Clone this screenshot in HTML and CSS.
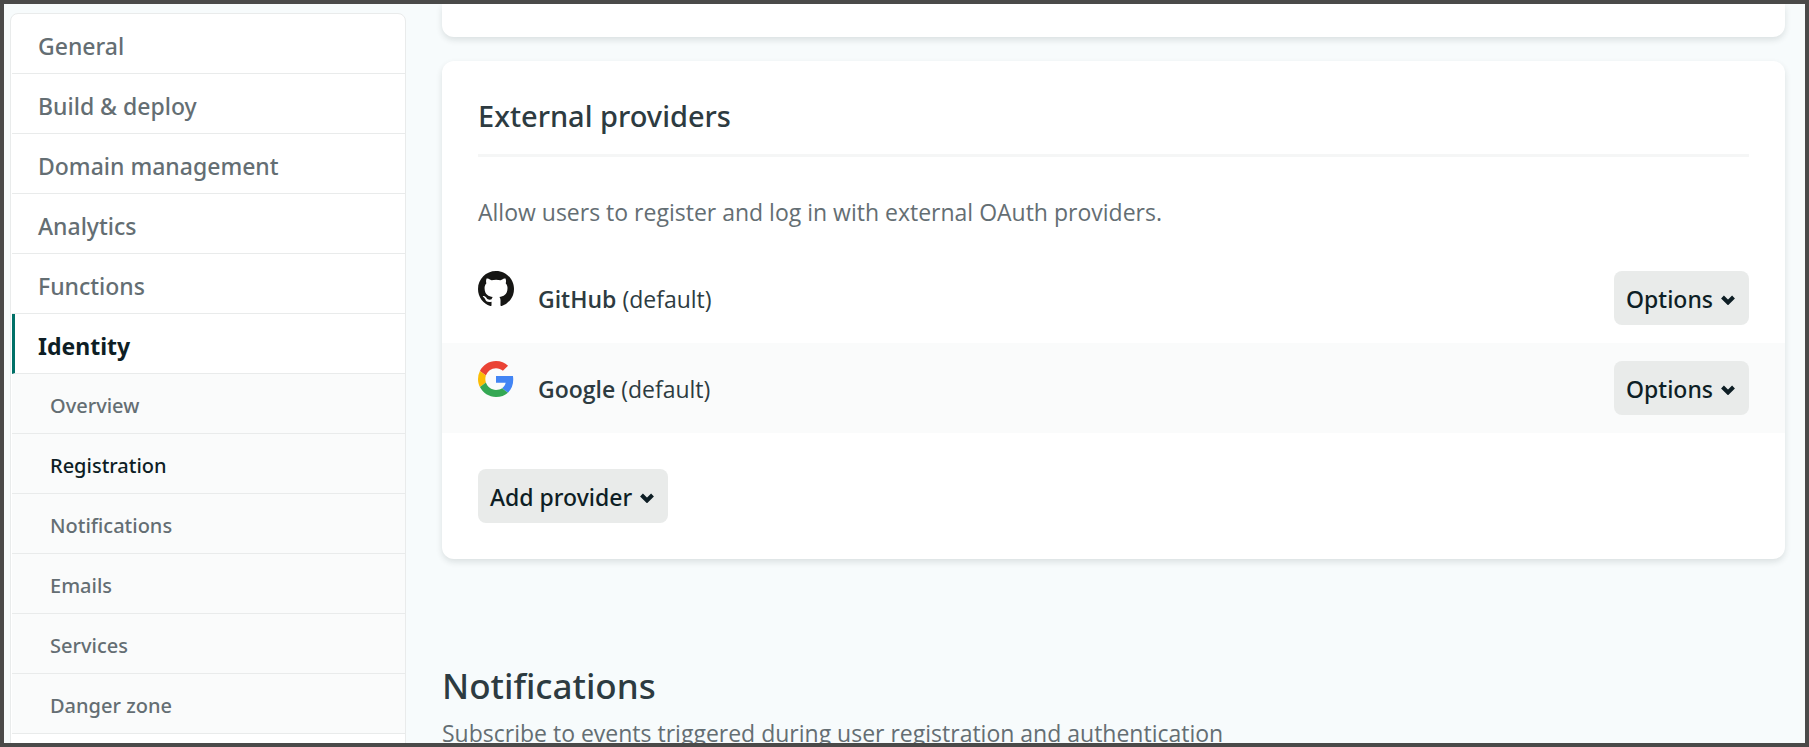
FILE: index.html
```html
<!DOCTYPE html>
<html lang="en">
<head>
<meta charset="utf-8">
<title>Identity settings</title>
<link rel="stylesheet" href="styles.css">
</head>
<body>
<div class="app">
  <nav class="sidebar" aria-label="Site settings">
    <ul class="menu">
      <li><a class="item" href="#general">General</a></li>
      <li><a class="item" href="#build">Build &amp; deploy</a></li>
      <li><a class="item" href="#domain">Domain management</a></li>
      <li><a class="item" href="#analytics">Analytics</a></li>
      <li><a class="item" href="#functions">Functions</a></li>
      <li><a class="item item-active" href="#identity">Identity</a>
        <ul class="submenu">
          <li><a class="item subitem" href="#overview">Overview</a></li>
          <li><a class="item subitem subitem-active" href="#registration">Registration</a></li>
          <li><a class="item subitem" href="#notifications">Notifications</a></li>
          <li><a class="item subitem" href="#emails">Emails</a></li>
          <li><a class="item subitem" href="#services">Services</a></li>
          <li><a class="item subitem" href="#danger">Danger zone</a></li>
        </ul>
      </li>
    </ul>
  </nav>
  <main class="content">
    <section class="card card-previous"></section>
    <section class="card card-providers">
      <h3 class="card-title">External providers</h3>
      <p class="card-text">Allow users to register and log in with external OAuth providers.</p>
      <ul class="providers">
        <li class="provider">
          <svg class="logo" viewBox="0 0 16 16" aria-hidden="true"><path fill="#161614" d="M8 0C3.58 0 0 3.58 0 8c0 3.54 2.29 6.53 5.47 7.59.4.07.55-.17.55-.38 0-.19-.01-.82-.01-1.49-2.01.37-2.53-.49-2.69-.94-.09-.23-.48-.94-.82-1.13-.28-.15-.68-.52-.01-.53.63-.01 1.08.58 1.23.82.72 1.21 1.87.87 2.33.66.07-.52.28-.87.51-1.07-1.78-.2-3.64-.89-3.64-3.95 0-.87.31-1.59.82-2.15-.08-.2-.36-1.02.08-2.12 0 0 .67-.21 2.2.82.64-.18 1.32-.27 2-.27s1.36.09 2 .27c1.53-1.04 2.2-.82 2.2-.82.44 1.1.16 1.92.08 2.12.51.56.82 1.27.82 2.15 0 3.07-1.87 3.75-3.65 3.95.29.25.54.73.54 1.48 0 1.07-.01 1.93-.01 2.2 0 .21.15.46.55.38A8.01 8.01 0 0 0 16 8c0-4.42-3.58-8-8-8z"/></svg>
          <span class="provider-name"><strong>GitHub</strong> (default)</span>
          <button class="button" type="button">Options <svg class="chevron" viewBox="0 0 14 10" aria-hidden="true"><path d="M1.500 2l5.500 5.500 5.500-5.500"/></svg></button>
        </li>
        <li class="provider">
          <svg class="logo" viewBox="0 0 48 48" aria-hidden="true"><path fill="#ea4335" d="M24 9.5c3.54 0 6.71 1.22 9.21 3.6l6.85-6.85C35.9 2.38 30.47 0 24 0 14.62 0 6.51 5.38 2.56 13.22l7.98 6.19C12.43 13.72 17.74 9.5 24 9.5z"/><path fill="#4285f4" d="M46.98 24.55c0-1.57-.15-3.09-.38-4.55H24v9.02h12.94c-.58 2.96-2.26 5.48-4.78 7.18l7.73 6c4.51-4.18 7.09-10.36 7.09-17.65z"/><path fill="#fbbc05" d="M10.53 28.59A14.5 14.5 0 0 1 9.77 24c0-1.6.27-3.14.76-4.59l-7.98-6.19A23.9 23.9 0 0 0 0 24c0 3.88.92 7.54 2.56 10.78l7.97-6.19z"/><path fill="#34a853" d="M24 48c6.48 0 11.93-2.13 15.89-5.81l-7.73-6C30.01 37.64 27.24 38.5 24 38.5c-6.26 0-11.57-4.22-13.47-9.91l-7.98 6.19C6.51 42.62 14.62 48 24 48z"/></svg>
          <span class="provider-name"><strong>Google</strong> (default)</span>
          <button class="button" type="button">Options <svg class="chevron" viewBox="0 0 14 10" aria-hidden="true"><path d="M1.500 2l5.500 5.500 5.500-5.500"/></svg></button>
        </li>
      </ul>
      <div class="actions">
        <button class="button" type="button">Add provider <svg class="chevron" viewBox="0 0 14 10" aria-hidden="true"><path d="M1.500 2l5.500 5.500 5.500-5.500"/></svg></button>
      </div>
    </section>
    <header class="section-header">
      <h2 class="section-title">Notifications</h2>
      <p class="section-text">Subscribe to events triggered during user registration and authentication</p>
    </header>
  </main>
</div>
</body>
</html>
```
FILE: styles.css
```css
* { box-sizing: border-box; }

body {
  margin: 0;
  font-family: "Noto Sans", "Open Sans", sans-serif;
  font-size: 23px;
  line-height: 36px;
  color: #2d3b41;
}

ul { margin: 0; padding: 0; list-style: none; }
h2, h3, p { margin: 0; }

.app {
  display: grid;
  grid-template-columns: 396px minmax(0, 1fr);
  gap: 36px;
  height: 100vh;
  padding: 0 20px 0 6px;
  border: 4px solid #4a4a49;
  overflow: hidden;
  background: #f7fbfc;
}

.sidebar { padding-top: 9px; }

.menu {
  min-height: 100vh;
  padding-left: 1px;
  border: 1px solid #e9ebeb;
  border-radius: 8px 8px 0 0;
  background: #fff;
}

.item {
  display: block;
  height: 60px;
  padding: 14px 24px 8px 26px;
  border-bottom: 1px solid #e9ebeb;
  color: #646e73;
  font-weight: 500;
  text-decoration: none;
}

.item-active {
  padding-left: 23px;
  border-left: 3px solid #007067;
  color: #0e1e25;
  font-weight: 700;
}

.submenu { background: #fafbfb; }
.subitem { padding-left: 38px; font-size: 20px; }
.subitem-active { color: #0e1e25; }

.card {
  border-radius: 12px;
  background: #fff;
  box-shadow: 0 3px 6px rgba(14, 30, 37, 0.12);
}

.card-previous {
  height: 33px;
  border-radius: 0 0 12px 12px;
}

.card-providers {
  margin-top: 24px;
  padding: 36px 0;
}

.card-title {
  margin: 0 36px;
  padding: 1px 0 20px;
  border-bottom: 3px solid #f5f6f6;
  font-size: 29px;
  font-weight: 500;
}

.card-text,
.section-text,
.provider-name {
  font-family: "Open Sans", "Noto Sans", sans-serif;
}

.card-text {
  margin: 0 36px;
  padding: 37px 0 23px;
  color: #646e73;
}

.provider {
  display: flex;
  align-items: flex-start;
  gap: 24px;
  padding: 18px 36px;
}

.provider:nth-child(even) { background: #fafbfb; }

.logo { width: 36px; height: 36px; }

.provider-name { flex: 1; padding: 10px 0 8px; }
.provider-name strong { font-weight: 600; }

.button {
  display: inline-flex;
  align-items: center;
  gap: 8px;
  height: 54px;
  padding: 1px 14px 0 12px;
  border: 0;
  border-radius: 8px;
  background: #e9ebea;
  color: #0e1e25;
  font: inherit;
  font-weight: 500;
}

.chevron {
  width: 14px;
  height: 10px;
  margin-top: 3px;
  fill: none;
  stroke: #0e1e25;
  stroke-width: 4;
}

.actions { display: flex; padding: 36px 36px 0; }

.section-header { padding-top: 99px; }

.section-title {
  padding-bottom: 2px;
  font-size: 35px;
  line-height: 55px;
  font-weight: 500;
}

.section-text { color: #646e73; }
```
